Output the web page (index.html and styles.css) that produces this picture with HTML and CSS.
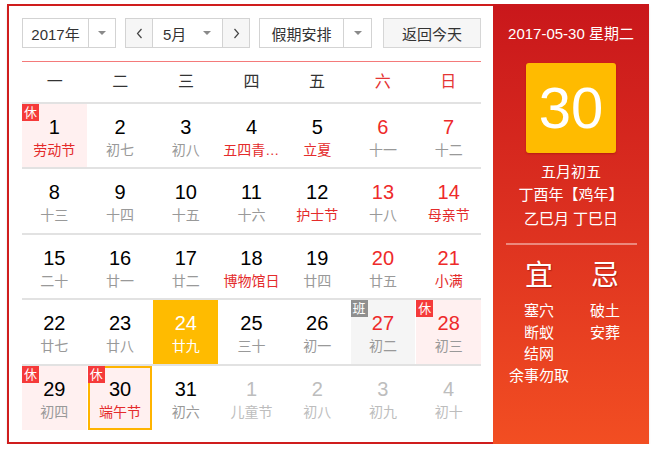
FILE: index.html
```html
<!DOCTYPE html>
<html lang="zh">
<head>
<meta charset="utf-8">
<title>万年历</title>
<link rel="stylesheet" href="styles.css">
</head>
<body>
<div class="cal">
  <div class="main">
    <div class="toolbar">
      <div class="sel sel-year">
        <span class="sel-text">2017年</span>
        <span class="sel-arrow"><i class="tri"></i></span>
      </div>
      <div class="sel sel-month">
        <span class="nav"><svg width="7" height="11" viewBox="0 0 7 11"><path d="M5.5 1 L1.5 5.5 L5.5 10" fill="none" stroke="#444" stroke-width="1.2"/></svg></span>
        <span class="month-mid"><span>5月</span><i class="tri"></i></span>
        <span class="nav"><svg width="7" height="11" viewBox="0 0 7 11"><path d="M1.5 1 L5.5 5.5 L1.5 10" fill="none" stroke="#444" stroke-width="1.2"/></svg></span>
      </div>
      <div class="sel sel-holiday">
        <span class="sel-text">假期安排</span>
        <span class="sel-arrow"><i class="tri"></i></span>
      </div>
      <div class="btn-today">返回今天</div>
    </div>
    <div class="week">
      <span>一</span><span>二</span><span>三</span><span>四</span><span>五</span><span class="we">六</span><span class="we">日</span>
    </div>
    <div class="grid">
      <div class="row">
        <div class="cell rest"><b class="tag">休</b><div class="num">1</div><div class="lunar fest">劳动节</div></div>
        <div class="cell"><div class="num">2</div><div class="lunar">初七</div></div>
        <div class="cell"><div class="num">3</div><div class="lunar">初八</div></div>
        <div class="cell"><div class="num">4</div><div class="lunar fest">五四青年节</div></div>
        <div class="cell"><div class="num">5</div><div class="lunar fest">立夏</div></div>
        <div class="cell weekend"><div class="num">6</div><div class="lunar">十一</div></div>
        <div class="cell weekend"><div class="num">7</div><div class="lunar">十二</div></div>
      </div>
      <div class="row">
        <div class="cell"><div class="num">8</div><div class="lunar">十三</div></div>
        <div class="cell"><div class="num">9</div><div class="lunar">十四</div></div>
        <div class="cell"><div class="num">10</div><div class="lunar">十五</div></div>
        <div class="cell"><div class="num">11</div><div class="lunar">十六</div></div>
        <div class="cell"><div class="num">12</div><div class="lunar fest">护士节</div></div>
        <div class="cell weekend"><div class="num">13</div><div class="lunar">十八</div></div>
        <div class="cell weekend"><div class="num">14</div><div class="lunar fest">母亲节</div></div>
      </div>
      <div class="row">
        <div class="cell"><div class="num">15</div><div class="lunar">二十</div></div>
        <div class="cell"><div class="num">16</div><div class="lunar">廿一</div></div>
        <div class="cell"><div class="num">17</div><div class="lunar">廿二</div></div>
        <div class="cell"><div class="num">18</div><div class="lunar fest">博物馆日</div></div>
        <div class="cell"><div class="num">19</div><div class="lunar">廿四</div></div>
        <div class="cell weekend"><div class="num">20</div><div class="lunar">廿五</div></div>
        <div class="cell weekend"><div class="num">21</div><div class="lunar fest">小满</div></div>
      </div>
      <div class="row">
        <div class="cell"><div class="num">22</div><div class="lunar">廿七</div></div>
        <div class="cell"><div class="num">23</div><div class="lunar">廿八</div></div>
        <div class="cell selected"><div class="num">24</div><div class="lunar">廿九</div></div>
        <div class="cell"><div class="num">25</div><div class="lunar">三十</div></div>
        <div class="cell"><div class="num">26</div><div class="lunar">初一</div></div>
        <div class="cell weekend work"><b class="tag tag-work">班</b><div class="num">27</div><div class="lunar">初二</div></div>
        <div class="cell weekend rest"><b class="tag">休</b><div class="num">28</div><div class="lunar">初三</div></div>
      </div>
      <div class="row">
        <div class="cell rest"><b class="tag">休</b><div class="num">29</div><div class="lunar">初四</div></div>
        <div class="cell rest today"><b class="tag">休</b><div class="num">30</div><div class="lunar fest">端午节</div></div>
        <div class="cell"><div class="num">31</div><div class="lunar">初六</div></div>
        <div class="cell other"><div class="num">1</div><div class="lunar">儿童节</div></div>
        <div class="cell other"><div class="num">2</div><div class="lunar">初八</div></div>
        <div class="cell other"><div class="num">3</div><div class="lunar">初九</div></div>
        <div class="cell other"><div class="num">4</div><div class="lunar">初十</div></div>
      </div>
    </div>
  </div>
  <div class="side">
    <div class="side-date">2017-05-30 星期二</div>
    <div class="big-day">30</div>
    <div class="side-lunar">
      <div>五月初五</div>
      <div>丁酉年【鸡年】</div>
      <div>乙巳月 丁巳日</div>
    </div>
    <div class="side-line"></div>
    <div class="yiji">
      <div class="yiji-col">
        <div class="yiji-title">宜</div>
        <div>塞穴</div>
        <div>断蚁</div>
        <div>结网</div>
        <div>余事勿取</div>
      </div>
      <div class="yiji-col">
        <div class="yiji-title">忌</div>
        <div>破土</div>
        <div>安葬</div>
      </div>
    </div>
  </div>
</div>
</body>
</html>
```
FILE: styles.css
```css
* { box-sizing: border-box; }
html, body { margin: 0; padding: 0; background: #fff; }
body {
  font-family: "Liberation Sans", "Noto Sans CJK SC", sans-serif;
  color: #333;
}
.cal {
  display: flex;
  margin: 4px 0 0 7px;
  width: 642px;
  height: 440px;
  box-shadow: 0 2px 2px rgba(0,0,0,0.12);
}
.main {
  width: 486px;
  height: 440px;
  border: 2px solid #cf1d1d;
  border-right: none;
  padding: 12px 12px 0 13px;
  background: #fff;
}
.toolbar {
  display: flex;
  height: 30px;
  font-size: 15px;
  color: #333;
}
.sel {
  display: flex;
  height: 30px;
  border: 1px solid #d3d3d3;
  background: #fff;
  margin-right: 9px;
}
.sel-text {
  display: flex;
  align-items: center;
  justify-content: center;
}
.sel-arrow {
  display: flex;
  align-items: center;
  justify-content: center;
  border-left: 1px solid #d3d3d3;
}
.sel-year { width: 94px; }
.sel-year .sel-text { width: 65px; }
.sel-year .sel-arrow { width: 27px; }
.sel-month { width: 125px; }
.nav {
  width: 27px;
  display: flex;
  align-items: center;
  justify-content: center;
  background: #f6f6f6;
}
.nav:first-child { border-right: 1px solid #d3d3d3; }
.nav:last-child { border-left: 1px solid #d3d3d3; }
.month-mid {
  flex: 1;
  display: flex;
  align-items: center;
  padding-left: 10px;
}
.month-mid .tri { margin-left: 17px; }
.sel-holiday { width: 113px; margin-right: 11px; }
.sel-holiday .sel-text { width: 83px; }
.sel-holiday .sel-arrow { width: 28px; }
.tri {
  display: inline-block;
  width: 0;
  height: 0;
  border-left: 4px solid transparent;
  border-right: 4px solid transparent;
  border-top: 4px solid #8a8a8a;
}
.btn-today {
  width: 98px;
  height: 30px;
  border: 1px solid #d6d6d6;
  background: #f6f6f6;
  display: flex;
  align-items: center;
  justify-content: center;
}
.week {
  margin-top: 13px;
  border-top: 1px solid #f47a7a;
  display: grid;
  grid-template-columns: repeat(7, minmax(0, 1fr));
  width: 459px;
  height: 40.7px;
  font-size: 16px;
  color: #333;
}
.week span {
  text-align: center;
  line-height: 39.7px;
}
.week .we { color: #e53535; }
.grid { width: 459px; }
.row {
  display: grid;
  grid-template-columns: repeat(7, minmax(0, 1fr));
  column-gap: 1px;
  height: 65.6px;
  border-top: 2px solid #e2e2e2;
}
.cell {
  position: relative;
  text-align: center;
  padding: 12px 4px 0;
  height: 63.6px;
  min-width: 0;
}
.num {
  font-size: 20px;
  line-height: 23px;
  color: #000;
}
.lunar {
  font-size: 14px;
  line-height: 20px;
  margin-top: 1px;
  color: #999;
  white-space: nowrap;
  overflow: hidden;
  text-overflow: ellipsis;
}
.lunar.fest { color: #e42b2b; }
.weekend .num { color: #ee2a2a; }
.rest { background: #fff0f0; }
.work { background: #f5f5f5; }
.selected { background: #ffbb00; }
.selected .num, .selected .lunar { color: #fff; }
.today { box-shadow: inset 0 0 0 2px #ffb400; }
.other .num, .other .lunar { color: #bdbdbd; }
.tag {
  position: absolute;
  top: 0;
  left: 0;
  width: 17px;
  height: 17px;
  font-size: 13px;
  line-height: 17px;
  font-weight: normal;
  color: #fff;
  background: #f53a3a;
  text-align: center;
}
.tag-work { background: #8f8f8f; }
.side {
  width: 156px;
  height: 440px;
  background: linear-gradient(180deg, #c9171b 0%, #dd3120 50%, #f24e22 100%);
  color: #fff;
  padding: 20px 13px 0;
  display: flex;
  flex-direction: column;
  align-items: center;
}
.side-date {
  font-size: 15px;
  line-height: 20px;
  white-space: nowrap;
}
.big-day {
  margin-top: 19px;
  width: 90px;
  height: 90px;
  background: #ffbb00;
  border-radius: 3px;
  box-shadow: 0 1px 2px rgba(120,0,0,0.35);
  font-size: 58px;
  line-height: 90px;
  text-align: center;
  color: #fff;
}
.side-lunar {
  margin-top: 7px;
  font-size: 15px;
  line-height: 23.3px;
  text-align: center;
}
.side-line {
  margin-top: 13px;
  width: 131px;
  height: 2px;
  background: rgba(255,255,255,0.42);
}
.yiji {
  display: flex;
  justify-content: center;
  margin-top: 14px;
  margin-left: 2px;
}
.yiji-col {
  width: 66px;
  text-align: center;
  font-size: 15px;
  line-height: 21.7px;
  white-space: nowrap;
}
.yiji-title {
  font-size: 28px;
  line-height: 34px;
  margin-bottom: 7px;
  text-shadow: 1px 1px 1px rgba(90,0,0,0.35);
}
```
